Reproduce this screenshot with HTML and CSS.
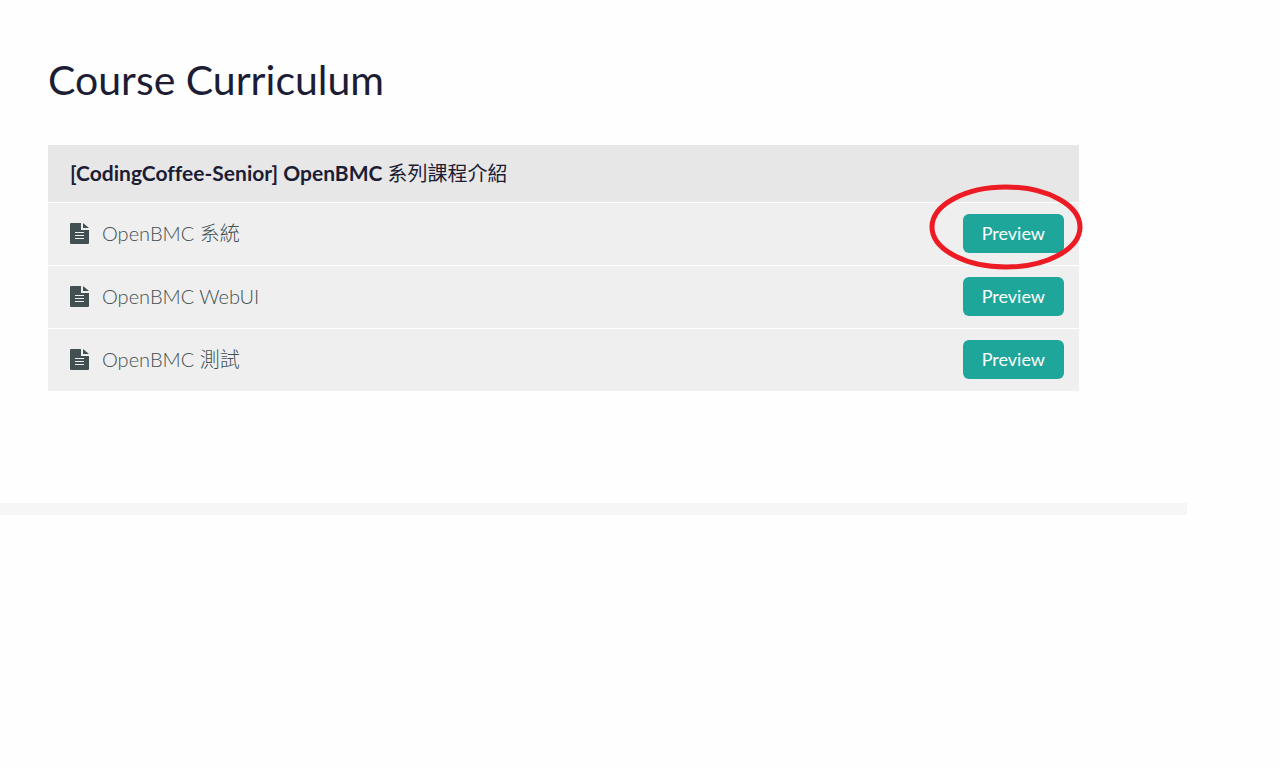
FILE: index.html
```html
<!DOCTYPE html>
<html lang="zh-Hant">
<head>
  <meta charset="UTF-8">
  <meta name="viewport" content="width=device-width, initial-scale=1.0">
  <title>Course Curriculum</title>
  <link rel="stylesheet" href="styles.css">
</head>
<body>

  <!-- File icon shared by all lectures -->
  <svg class="sprite" aria-hidden="true">
    <symbol id="icon-file" viewBox="0 0 19 21">
      <path d="M1 0H11V7H19V20a1 1 0 0 1-1 1H1a1 1 0 0 1-1-1V1a1 1 0 0 1 1-1z" fill="#425052"/>
      <path d="M13 0l6 5H13z" fill="#425052"/>
      <path d="M5 9.5h9M5 12.5h9M5 15.5h9" stroke="#efefef" stroke-width="1"/>
    </symbol>
  </svg>

  <main class="page">
    <section class="curriculum">
      <h1>Course Curriculum</h1>

      <div class="course-section">
        <h2 class="section-title">[CodingCoffee-Senior] OpenBMC <span class="section-zh">系列課程介紹</span></h2>
        <ul class="lecture-list">
          <li class="lecture">
            <svg class="lecture-icon" aria-hidden="true"><use href="#icon-file"/></svg>
            <span class="lecture-name">OpenBMC 系統</span>
            <div class="preview">
              <button type="button" class="btn-preview">Preview</button>
              <svg class="circle-mark" viewBox="0 0 154 86" aria-hidden="true">
                <ellipse cx="77" cy="43" rx="74" ry="40" fill="none" stroke="#ed1c24" stroke-width="5"/>
              </svg>
            </div>
          </li>
          <li class="lecture">
            <svg class="lecture-icon" aria-hidden="true"><use href="#icon-file"/></svg>
            <span class="lecture-name">OpenBMC WebUI</span>
            <button type="button" class="btn-preview">Preview</button>
          </li>
          <li class="lecture">
            <svg class="lecture-icon" aria-hidden="true"><use href="#icon-file"/></svg>
            <span class="lecture-name">OpenBMC 測試</span>
            <button type="button" class="btn-preview">Preview</button>
          </li>
        </ul>
      </div>
    </section>
  </main>

</body>
</html>
```

FILE: styles.css
```css
* {
  box-sizing: border-box;
}
body {
  margin: 0;
  background-color: #fefefe;
  font-family: Lato, "Noto Sans CJK TC", sans-serif;
  font-variant-ligatures: none;
  color: #1c1d35;
}
.sprite {
  display: none;
}
.page {
  margin-right: 93px;
}
.curriculum {
  padding: 56px 108px 112px 48px;
  border-bottom: 12px solid #f6f6f6;
}
h1 {
  margin: 0 0 41px;
  font-size: 41px;
  line-height: 48px;
  font-weight: 400;
}
.section-title {
  margin: 0;
  padding: 14px 22px 15px;
  background-color: #e7e7e7;
  font-size: 21px;
  line-height: 28px;
  font-weight: 700;
}
.section-zh {
  font-size: 20px;
  font-weight: 400;
}
.lecture-list {
  list-style: none;
  margin: 0;
  padding: 0;
}
.lecture {
  display: flex;
  align-items: center;
  padding: 11px 15px 12px 22px;
  border-top: 1px solid #fff;
  background-color: #efefef;
}
.lecture-icon {
  width: 19px;
  height: 21px;
  margin-right: 13px;
}
.lecture-name {
  flex: 1;
  padding-bottom: 2px;
  font-size: 20px;
  line-height: 28px;
  font-weight: 300;
  color: #425052;
}
.preview {
  position: relative;
}
.btn-preview {
  display: block;
  padding: 8px 19px 9px;
  border: none;
  border-radius: 6px;
  background-color: #1fa69a;
  color: #fff;
  font-family: inherit;
  font-size: 18px;
  line-height: 22px;
  cursor: pointer;
}
.btn-preview:hover {
  background-color: #1a8d83;
}
/* Hand-drawn mark over the first preview button */
.circle-mark {
  position: absolute;
  top: -30px;
  right: -19px;
  width: 154px;
  height: 86px;
  pointer-events: none;
}
```
